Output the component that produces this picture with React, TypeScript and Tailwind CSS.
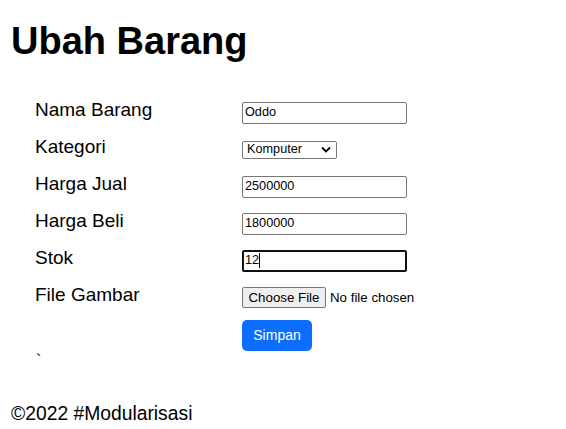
import React from "react";

const rows = [
  { label: "Nama Barang", value: "Oddo" },
  { label: "Kategori", select: true },
  { label: "Harga Jual", value: "2500000" },
  { label: "Harga Beli", value: "1800000" },
  { label: "Stok", value: "12", focused: true },
  { label: "File Gambar", file: true },
];

export default function App() {
  return (
    <div className="min-h-[429px] w-[566px] bg-white text-black font-['Liberation_Sans',Arial,sans-serif]">
      <h1 className="pl-[11px] pt-[19px] text-[38px] font-bold leading-[44px]">Ubah Barang</h1>
      <div className="mt-[31px] pl-[35px]">
        {rows.map((r) => (
          <div key={r.label} className="flex h-[37px] items-center">
            <div className="w-[207px] text-[19px] leading-[22px] -mt-[6px]">{r.label}</div>
            {r.select ? (
              <div className="flex h-[18px] w-[95px] items-center justify-between rounded-[2px] border border-[#767676] pl-[4px] pr-[5px] text-[12.7px]">
                <span>Komputer</span>
                <svg width="10" height="7" viewBox="0 0 10 7" fill="none" stroke="black" strokeWidth="1.8">
                  <path d="M1 1.5 L5 5.5 L9 1.5" />
                </svg>
              </div>
            ) : r.file ? (
              <div className="flex items-center text-[13.3px]">
                <div className="flex h-[21px] w-[84px] items-center justify-center rounded-[2px] border border-[#767676] bg-[#efefef] text-[13.3px]">
                  Choose File
                </div>
                <span className="ml-[4px]">No file chosen</span>
              </div>
            ) : (
              <div
                className={
                  r.focused
                    ? "flex h-[22px] w-[165px] items-center rounded-[2px] border-2 border-[#101010] pl-[1px] text-[12.7px]"
                    : "flex h-[22px] w-[165px] items-center rounded-[2px] border border-[#767676] pl-[2px] text-[12.7px]"
                }
              >
                <span>{r.value}</span>
                {r.focused && <span className="h-[15px] w-[1px] bg-black" />}
              </div>
            )}
          </div>
        ))}
        <div className="flex">
          <div className="w-[207px]" />
          <button className="mt-[4px] flex h-[31px] w-[70px] items-center justify-center rounded-[5px] bg-[#0d6efd] text-[14px] text-white">
            Simpan
          </button>
        </div>
        <div className="mt-[2px] pl-[1px] text-[16px] leading-[16px]">`</div>
      </div>
      <div className="mt-[34px] pl-[11px] text-[19.3px] leading-[22px]">©2022 #Modularisasi</div>
    </div>
  );
}
